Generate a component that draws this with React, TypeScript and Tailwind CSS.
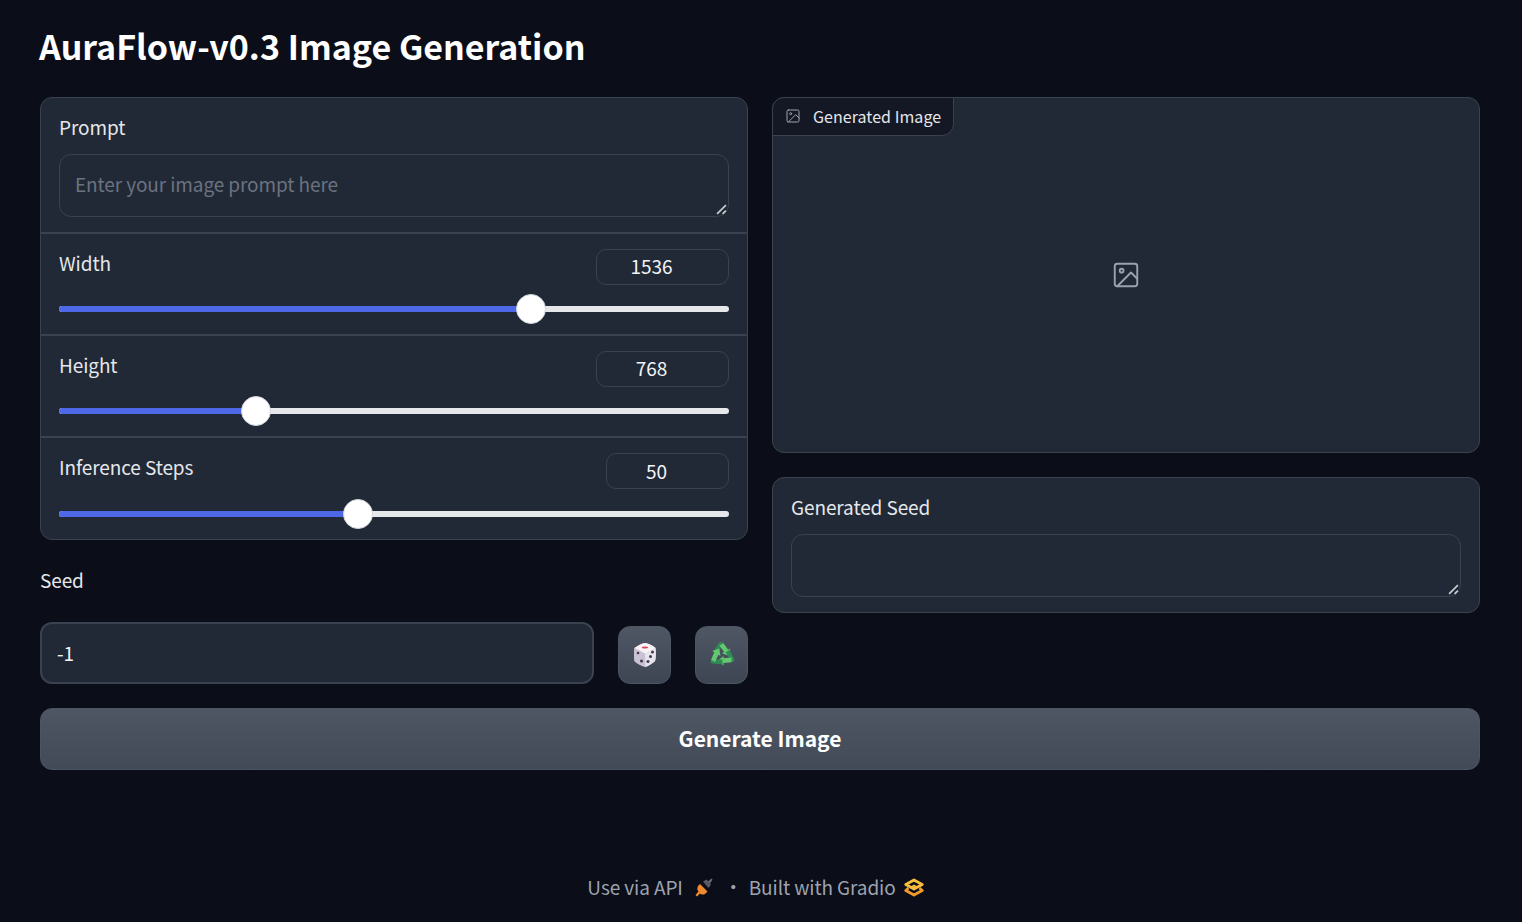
import React from 'react';

const SLIDERS = [
  { label: 'Width', value: '1536', percent: 70.4, boxWidth: 'w-[133px]', rowHeight: 'h-[102px]', trackGap: 'mt-[21px]', boxPad: 'pb-[1px]' },
  { label: 'Height', value: '768', percent: 29.4, boxWidth: 'w-[133px]', rowHeight: 'h-[102px]', trackGap: 'mt-[21px]', boxPad: 'pb-[1px]' },
  { label: 'Inference Steps', value: '50', percent: 44.6, boxWidth: 'w-[123px]', rowHeight: 'h-[103px]', trackGap: 'mt-[22px]', boxPad: 'pt-[1px]' },
];

const ImageIcon: React.FC<{ className?: string }> = ({ className }) => (
  <svg className={className} viewBox="0 0 24 24" fill="none" stroke="currentColor" strokeWidth={1.5} strokeLinecap="round" strokeLinejoin="round">
    <rect x="3" y="3" width="18" height="18" rx="2" />
    <circle cx="8.5" cy="8.5" r="1.5" />
    <path d="M21 15l-5-5L5 21" />
  </svg>
);

const ResizeHandle = () => (
  <svg className="absolute right-[1px] bottom-[1px] w-[11px] h-[11px]" viewBox="0 0 10 10" fill="none">
    <path d="M1 9L9 1" stroke="#c9ccd1" strokeWidth={1.5} />
    <path d="M6 9L9 6" stroke="#c9ccd1" strokeWidth={1.5} />
  </svg>
);

const Dice = () => (
  <svg className="w-[24px] h-[26px]" viewBox="0 0 24 26">
    <path d="M12 1C14 1 21 4 22.500 6 23 9 23 16 22 19 20 21 15 24 12.500 25 9 24 3 21 1.500 19 1 15 1 9 1.500 6 4 4 10 1 12 1Z" fill="#dcd6e4" />
    <path d="M12 1C14 1 21 4 22.500 6L12 11.500 1.500 6C4 4 10 1 12 1Z" fill="#f7f3f5" />
    <path d="M12 11.500L22.500 6C23 9 23 16 22 19 20 21 15 24 12.500 25Z" fill="#e9e5ee" />
    <path d="M1.500 6L12 11.500 12.500 25C9 24 3 21 1.500 19 1 15 1 9 1.500 6Z" fill="#c9c2d4" />
    <ellipse cx="12" cy="5.500" rx="3.200" ry="1.100" fill="#d9485a" />
    <circle cx="5" cy="11" r="1.300" fill="#3d3a4c" />
    <circle cx="8.500" cy="19" r="1.500" fill="#3d3a4c" />
    <circle cx="19.500" cy="10" r="1.500" fill="#3d3a4c" />
    <circle cx="17.500" cy="14.500" r="1.500" fill="#3d3a4c" />
    <circle cx="15" cy="19.500" r="1.500" fill="#3d3a4c" />
  </svg>
);

const Recycle = () => (
  <svg className="w-[26px] h-[26px]" viewBox="1 2 22 22">
    {[0, 120, 240].map((angle) => (
      <g key={angle} transform={`rotate(${angle} 12 13)`}>
        <path d="M13.200 3L11.500 1.500 10 2 5 9.500 8.500 11.500 11.500 6Z" fill="#2f8a56" />
        <path d="M9.800 5L13.200 3 17.200 8.500 19 7.500 18 13.800 12 11.500 13.800 10.500Z" fill="#62c96f" />
      </g>
    ))}
  </svg>
);

const Plug = () => (
  <svg className="w-[18px] h-[19px]" viewBox="0 0 18 19">
    <path d="M13 3.500L16.500 0.500 17.500 1.500 15 5.500Z" fill="#6b7078" />
    <path d="M8 3.500L11.500 1.500 16 6.500 13.500 10Z" fill="#565b66" />
    <path d="M5 6L12.500 13.500 10 16C8 17 6 16.500 5 15.500L2 18.500 0.500 17 3.500 13.500C2 12 2 10 3 8Z" fill="#f0892b" />
  </svg>
);

const GradioLogo = () => (
  <svg className="w-[20px] h-[19px]" viewBox="0 0 20 19" fill="none" strokeWidth={2.800} strokeLinejoin="round">
    <path d="M4.500 10L1.800 12.500 10 17 18.200 12.500 15.500 10" stroke="#f09a2a" />
    <path d="M10 2L18.200 6.500 10 11 1.800 6.500Z" stroke="#f7bd3d" />
    <path d="M7 9.500L10 7.500 13 9.500" stroke="#f7bd3d" strokeWidth={1.800} />
  </svg>
);

const SliderRow: React.FC<{ label: string; value: string; percent: number; boxWidth: string; rowHeight: string; trackGap: string; boxPad: string }> = ({ label, value, percent, boxWidth, rowHeight, trackGap, boxPad }) => (
  <div className={`${rowHeight} px-[18px] pt-[15px] border-t-2 border-[#3a414f]`}>
    <div className="flex justify-between items-start">
      <span className="text-[19px] tracking-[-0.1px] leading-[28px] text-[#e5e7eb]">{label}</span>
      <div className={`${boxWidth} ${boxPad} h-[36px] pr-[22px] rounded-[10px] border border-[#3a414f] flex items-center justify-center text-[19px] tracking-[-0.1px] text-[#f3f4f6]`}>
        {value}
      </div>
    </div>
    <div className={`relative h-[6px] ${trackGap} rounded-full bg-[#e5e7eb]`}>
      <div className="h-full rounded-full bg-[#4f68e8]" style={{ width: `${percent}%` }} />
      <div
        className="absolute top-[-12px] w-[30px] h-[30px] -ml-[15px] rounded-full bg-white border border-[#d1d5db]"
        style={{ left: `${percent}%` }}
      />
    </div>
  </div>
);

export default function App() {
  return (
    <div className="min-h-[922px] bg-[#0b0e18] pl-10 font-['Noto_Sans_CJK_SC','Noto_Sans',sans-serif] text-[#f3f4f6]">
      <div className="w-[1440px]">
        <h1 className="-ml-px pt-[22px] h-[97px] text-[34px] leading-[48px] font-semibold text-white">AuraFlow-v0.3 Image Generation</h1>

        <div className="grid grid-cols-2 gap-6">
          <div className="flex flex-col">
            <div className="rounded-[12px] border border-[#3a414f] bg-[#212936] overflow-hidden">
              <div className="h-[134px] px-[18px] pt-[14px]">
                <div className="text-[19px] tracking-[-0.1px] leading-[30px] text-[#e5e7eb]">Prompt</div>
                <div className="relative mt-[12px] h-[63px] rounded-[12px] border border-[#3a414f] px-[15px] py-[14px] text-[19px] tracking-[-0.1px] leading-[30px] text-[#6b7280]">
                  Enter your image prompt here
                  <ResizeHandle />
                </div>
              </div>
              {SLIDERS.map((s) => (
                <SliderRow key={s.label} {...s} />
              ))}
            </div>

            <div className="mt-[25px] text-[19px] tracking-[-0.1px] leading-[30px] text-[#e5e7eb]">Seed</div>
            <div className="mt-[27px] flex items-end gap-6">
              <div className="flex-1 h-[62px] rounded-[12px] border-2 border-[#3a414f] bg-[#212936] flex items-center px-[15px] text-[19px] tracking-[-0.1px]">-1</div>
              <button className="w-[53px] h-[58px] rounded-[12px] border border-[#4b5563] bg-gradient-to-b from-[#505764] to-[#3f4653] flex items-center justify-center">
                <Dice />
              </button>
              <button className="w-[53px] h-[58px] rounded-[12px] border border-[#4b5563] bg-gradient-to-b from-[#505764] to-[#3f4653] flex items-center justify-center">
                <Recycle />
              </button>
            </div>
          </div>

          <div className="flex flex-col gap-6">
            <div className="relative h-[356px] rounded-[12px] border border-[#3a414f] bg-[#212936] flex items-center justify-center">
              <div className="absolute -left-px -top-px h-[39px] pl-[12px] pr-[12px] pb-[2px] flex items-center gap-[12px] bg-[#141824] border border-[#3a414f] rounded-tl-[12px] rounded-br-[12px] text-[16px] tracking-[0.05px] text-[#e5e7eb]">
                <ImageIcon className="w-[16px] h-[16px] text-[#9ca3af]" />
                Generated Image
              </div>
              <ImageIcon className="w-[30px] h-[30px] text-[#9ca3af]" />
            </div>
            <div className="h-[136px] rounded-[12px] border border-[#3a414f] bg-[#212936] px-[18px] pt-[14px]">
              <div className="text-[19px] tracking-[-0.1px] leading-[30px] text-[#e5e7eb]">Generated Seed</div>
              <div className="relative mt-[12px] h-[63px] rounded-[12px] border border-[#3a414f]">
                <ResizeHandle />
              </div>
            </div>
          </div>
        </div>

        <button className="mt-6 w-full h-[62px] rounded-[12px] border border-[#4b5563] bg-gradient-to-b from-[#4f5663] to-[#434a57] text-[21px] font-semibold text-white">
          Generate Image
        </button>

        <footer className="mt-[99px] pr-[9px] flex items-center justify-center text-[19px] tracking-[-0.1px] leading-[36px] text-[#9ca3af]">
          <span>Use via API</span>
          <span className="ml-[12px]"><Plug /></span>
          <span className="ml-[11px] mr-[6px]">·</span>
          <span>Built with Gradio</span>
          <span className="ml-[8px]"><GradioLogo /></span>
        </footer>
      </div>
    </div>
  );
}
